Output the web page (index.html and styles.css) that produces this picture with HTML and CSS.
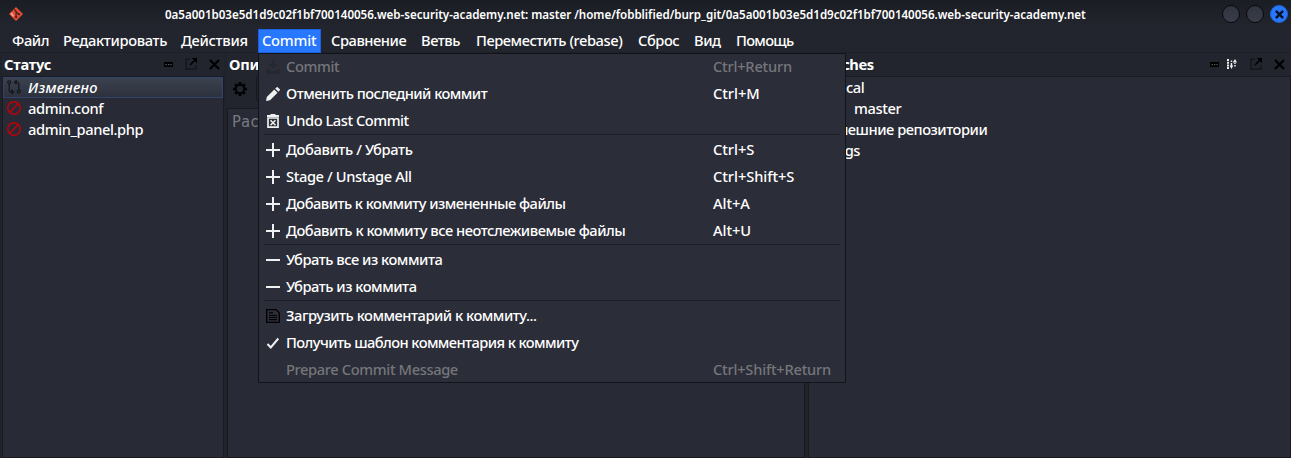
FILE: index.html
```html
<!DOCTYPE html>
<html lang="ru">
<head>
<meta charset="utf-8">
<title>Git Cola</title>
<link rel="stylesheet" href="styles.css">
</head>
<body>
<svg class="defs" width="0" height="0">
  <symbol id="dots" viewBox="0 0 9 5"><path d="M0 0h9v5H0z" fill="#000"/><path d="M1.5 2h1.3v1.2H1.5zM4 2h1.3v1.2H4zM6.4 2h1.3v1.2H6.4z" fill="#555960"/></symbol>
  <symbol id="popout" viewBox="0 0 12 12"><path d="M5 1.2H1v10h10V7" fill="none" stroke="#131417" stroke-width="1.3"/><path d="M5 7l5-5" stroke="#000" stroke-width="1.6"/><path d="M6.8 0H12v5.2z" fill="#000"/></symbol>
  <symbol id="close" viewBox="0 0 11 11"><path d="M1 1l9 9M10 1l-9 9" stroke="#000" stroke-width="2.2"/></symbol>
  <symbol id="blocked" viewBox="0 0 14 14"><circle cx="7" cy="7" r="6.3" fill="none" stroke="#c40006" stroke-width="1.4"/><path d="M2.6 11.4l8.800-8.800" stroke="#c40006" stroke-width="1.400"/></symbol>
  <symbol id="plus" viewBox="0 0 14 14"><path d="M7 0v14M0 7h14" stroke="#eff0f1" stroke-width="2"/></symbol>
  <symbol id="minus" viewBox="0 0 14 14"><path d="M0 7h14" stroke="#eff0f1" stroke-width="2"/></symbol>
</svg>
<div class="window">
  <header class="titlebar">
    <svg class="logo" viewBox="0 0 14 14"><path d="M7 0l7 7-7 7-7-7z" fill="#e84c30"/><path d="M5.3 2.5l1.8 1.8v6M7.1 4.8l2.8 2.6" fill="none" stroke="#3b2226" stroke-width="1.2"/><circle cx="7.1" cy="10.2" r="1.1" fill="#3b2226"/><circle cx="10" cy="7.2" r="1.1" fill="#3b2226"/><path d="M1.2 6.5l2-1 2 3.5-1.2.8z" fill="#eea79b"/></svg>
    <div class="title">0a5a001b03e5d1d9c02f1bf700140056.web-security-academy.net: master /home/fobblified/burp_git/0a5a001b03e5d1d9c02f1bf700140056.web-security-academy.net</div>
    <div class="controls"><i class="dot"></i><i class="dot"></i><i class="dot quit"><svg viewBox="0 0 8 8"><path d="M.8.8l6.400 6.400M7.200.8L.8 7.200" stroke="#0b111e" stroke-width="2.100"/></svg></i></div>
  </header>
  <nav class="menubar">
    <span class="m1">Файл</span><span class="m2">Редактировать</span><span class="m3">Действия</span><span class="m4 active">Commit</span><span class="m5">Сравнение</span><span class="m6">Ветвь</span><span class="m7">Переместить (rebase)</span><span class="m8">Сброс</span><span class="m9">Вид</span><span class="m10">Помощь</span>
  </nav>
  <main class="panes">
    <section class="pane status">
      <div class="head"><b>Статус</b><svg class="dots"><use href="#dots"/></svg><svg class="popout"><use href="#popout"/></svg><svg class="close"><use href="#close"/></svg></div>
      <div class="list">
        <div class="row selected"><svg viewBox="0 0 14 14"><g fill="none" stroke="#15171c" stroke-width="1.3"><circle cx="2.2" cy="2.3" r="1.5"/><path d="M2.2 4v6q0 2 2 2h2M4.3 9.8l2.2 2.2-2.2 2M11.8 10V4.2q0-2-2-2h-2M9.7 0L7.5 2.2l2.2 2.1"/><circle cx="11.8" cy="11.6" r="1.5"/></g></svg><em>Изменено</em></div>
        <div class="row"><svg><use href="#blocked"/></svg><span>admin.conf</span></div>
        <div class="row"><svg><use href="#blocked"/></svg><span>admin_panel.php</span></div>
      </div>
    </section>
    <section class="pane editor">
      <div class="head"><b>Описание</b></div>
      <div class="summary"><svg viewBox="0 0 14 14"><circle cx="7" cy="7" r="4.2" fill="none" stroke="#000" stroke-width="2"/><g stroke="#000" stroke-width="2.6"><path d="M7 0v2.5M7 11.5V14M0 7h2.5M11.5 7H14M2.1 2.1l1.7 1.7M10.2 10.2l1.7 1.7M11.9 2.1l-1.7 1.7M3.8 10.2l-1.7 1.7"/></g></svg><div class="input"></div></div>
      <div class="description">Расширенное описание...</div>
    </section>
    <section class="pane branches">
      <div class="head"><b>Branches</b><svg class="dots"><use href="#dots"/></svg><svg class="sort" viewBox="0 0 10 10"><path d="M0 0h2v2H0zM0 2.700h2v2H0zM0 5.400h2v2H0zM0 8.100h2v1.900H0zM3.700 1.500h1.500v1.500H3.700zM3.700 4h1.500v3H3.700zM2.700 6.500h3.500L4.500 10zM7.200 3h1.500v2H7.200zM7.200 6h1.500v1.500H7.200zM5.700 3.500H10L8 0z" fill="#eee"/></svg><svg class="popout"><use href="#popout"/></svg><svg class="close"><use href="#close"/></svg></div>
      <div class="list">
        <div class="row">Local</div>
        <div class="row child">master</div>
        <div class="row remote">Внешние репозитории</div>
        <div class="row">Tags</div>
      </div>
    </section>
  </main>
</div>
<div class="menu">
  <div class="item off"><svg viewBox="0 0 14 14"><path d="M5.5 0h3v4H12L7 9 2 4h3.500zM0 9h3l2 2h4l2-2h3v5H0z" fill="#262831"/></svg><span class="loose">Commit</span><kbd class="tight">Ctrl+Return</kbd></div>
  <div class="item"><svg viewBox="0 0 14 14"><path d="M0 14l.8-4L8.300 2.500l3.200 3.200L4 13.200zM9.200 1.600L10.700.2q.5-.4 1 0l2.100 2.100q.4.500 0 1l-1.400 1.500z" fill="#eff0f1"/></svg><span class="tight">Отменить последний коммит</span><kbd>Ctrl+M</kbd></div>
  <div class="item"><svg viewBox="0 0 14 14"><path d="M1 1h3.500V0h5v1H13v2H1z" fill="#eff0f1"/><path d="M2 4h10v9.200H2z" fill="none" stroke="#eff0f1" stroke-width="1.700"/><path d="M4.500 6.200l5 5M9.500 6.200l-5 5" stroke="#eff0f1" stroke-width="1.500"/></svg><span>Undo Last Commit</span></div>
  <hr>
  <div class="item"><svg><use href="#plus"/></svg><span class="loose">Добавить / Убрать</span><kbd>Ctrl+S</kbd></div>
  <div class="item"><svg><use href="#plus"/></svg><span class="loose">Stage / Unstage All</span><kbd>Ctrl+Shift+S</kbd></div>
  <div class="item"><svg><use href="#plus"/></svg><span class="tight">Добавить к коммиту измененные файлы</span><kbd>Alt+A</kbd></div>
  <div class="item"><svg><use href="#plus"/></svg><span>Добавить к коммиту все неотслеживемые файлы</span><kbd>Alt+U</kbd></div>
  <hr>
  <div class="item"><svg><use href="#minus"/></svg><span>Убрать все из коммита</span></div>
  <div class="item"><svg><use href="#minus"/></svg><span>Убрать из коммита</span></div>
  <hr>
  <div class="item"><svg viewBox="0 0 14 14"><path d="M.7.7h9.600l3 3.200v9.400H.7z" fill="none" stroke="#000" stroke-width="1.300"/><path d="M3 3.800h4M3 6.500h8M3 8.500h8M3 10.700h8" stroke="#000" stroke-width="1.200"/></svg><span>Загрузить комментарий к коммиту...</span></div>
  <div class="item"><svg viewBox="0 0 14 14"><path d="M1.500 8l3.300 3.500 7.500-9" fill="none" stroke="#eff0f1" stroke-width="2"/></svg><span class="tighter">Получить шаблон комментария к коммиту</span></div>
  <div class="item off"><svg></svg><span class="loose">Prepare Commit Message</span><kbd class="tight">Ctrl+Shift+Return</kbd></div>
</div>
</body>
</html>
```
FILE: styles.css
```css
* { box-sizing: border-box; }
body { margin: 0; width: 1291px; height: 458px; overflow: hidden; background: #22252d; color: #fff; font: 500 14.67px/21px "Noto Sans", sans-serif; white-space: nowrap; }
.defs { position: absolute; }
svg { flex: none; display: block; }
.window { display: flex; flex-direction: column; height: 458px; }
.titlebar { display: flex; align-items: center; height: 29px; padding: 0 3px 1px 9px; background: linear-gradient(#1b1d24, #23262e); }
.logo { width: 14px; height: 14px; }
.title { flex: 1; padding-left: 142px; font-size: 11.6px; font-weight: 600; line-height: 27px; letter-spacing: -.027px; }
.controls { display: flex; gap: 6px; }
.dot { width: 18px; height: 18px; border: 1px solid #08090c; border-radius: 50%; background: linear-gradient(#303440, #3a3e4a); }
.quit { display: grid; place-items: center; background: #2777ff; border-color: #2063d4; }
.quit svg { width: 9px; height: 9px; }
.menubar { display: flex; height: 24px; padding-left: 7px; line-height: 22px; letter-spacing: -.45px; border-bottom: 1px solid #1e2027; }
.menubar span { padding: 0 5px; }
.menubar .m1 { width: 51px; }
.menubar .m2 { width: 118px; letter-spacing: -.32px; }
.menubar .m3 { width: 82px; letter-spacing: -.3px; }
.menubar .m4 { width: 63px; padding: 0 4px; letter-spacing: -.2px; }
.menubar .m5 { width: 90px; margin-left: 5px; }
.menubar .m6 { width: 55px; }
.menubar .m7 { width: 162px; }
.menubar .m8 { width: 56px; }
.menubar .m9 { width: 42px; }
.menubar .m10 { letter-spacing: -.7px; }
.menubar .active { height: 24px; background: #2777ff; border: 1px solid #1b60dc; line-height: 20px; padding: 0 3px; }
.panes { display: flex; gap: 3px; flex: 1; padding-left: 2px; background: #20242a; }
.pane { display: flex; flex-direction: column; }
.status { width: 222px; }
.editor { width: 578px; }
.branches { width: 483px; }
.head { display: flex; align-items: center; height: 23px; padding: 0 4px 1px 2px; line-height: 22px; background: #22252d; }
.head b { font-weight: 700; margin-right: auto; letter-spacing: -.2px; }
.branches .head { padding-right: 6px; }
.branches .head b { letter-spacing: -.5px; }
.dots { width: 9px; height: 5px; }
.sort { width: 10px; height: 10px; margin-left: 8px; }
.popout { width: 12px; height: 12px; margin-left: 12px; }
.close { width: 11px; height: 11px; margin-left: 12px; }
.branches .popout { margin-left: 13px; }
.list { flex: 1; border: 1px solid #191b21; background: #282a35; letter-spacing: -.4px; }
.row { display: flex; align-items: center; height: 21px; padding-left: 4px; }
.row svg { width: 14px; height: 14px; margin: 0 7px 2px 0; }
.row em { letter-spacing: .25px; }
.selected { border: 1px solid #33446a; background: linear-gradient(#3c414f, #2c313d); padding-left: 3px; }
.branches .row { padding-left: 21px; }
.branches .child { padding-left: 45px; }
.branches .remote { letter-spacing: -.46px; }
.summary { display: flex; align-items: center; height: 32px; padding: 0 0 6px 6px; background: #22252d; }
.summary svg { width: 14px; height: 14px; }
.input { flex: 1; height: 26px; margin-left: 9px; border: 1px solid #17191f; border-radius: 3px; }
.description { flex: 1; padding: 1px 4px; border: 1px solid #17191f; background: #282a35; color: #787980; font: 15px/24px "DejaVu Sans Mono", monospace; }
.menu { position: absolute; left: 258px; top: 53px; width: 588px; height: 330px; border: 1px solid #12141a; background: #2b2d38; }
.item { display: flex; align-items: center; height: 27px; padding: 0 0 2px 7px; letter-spacing: -.47px; }
.item svg { width: 14px; height: 14px; }
.item span { width: 427px; margin-left: 6px; }
.item .loose { letter-spacing: -.38px; }
.item .tight { letter-spacing: -.53px; }
.item .tighter { letter-spacing: -.57px; }
.item kbd { font: inherit; letter-spacing: -.05px; }
.item kbd.tight { letter-spacing: -.22px; }
.off { color: #75767b; }
.menu hr { height: 1px; margin: 0 5px 1px; border: 0; background: #1e2027; transform: translateY(-1px); }
```
